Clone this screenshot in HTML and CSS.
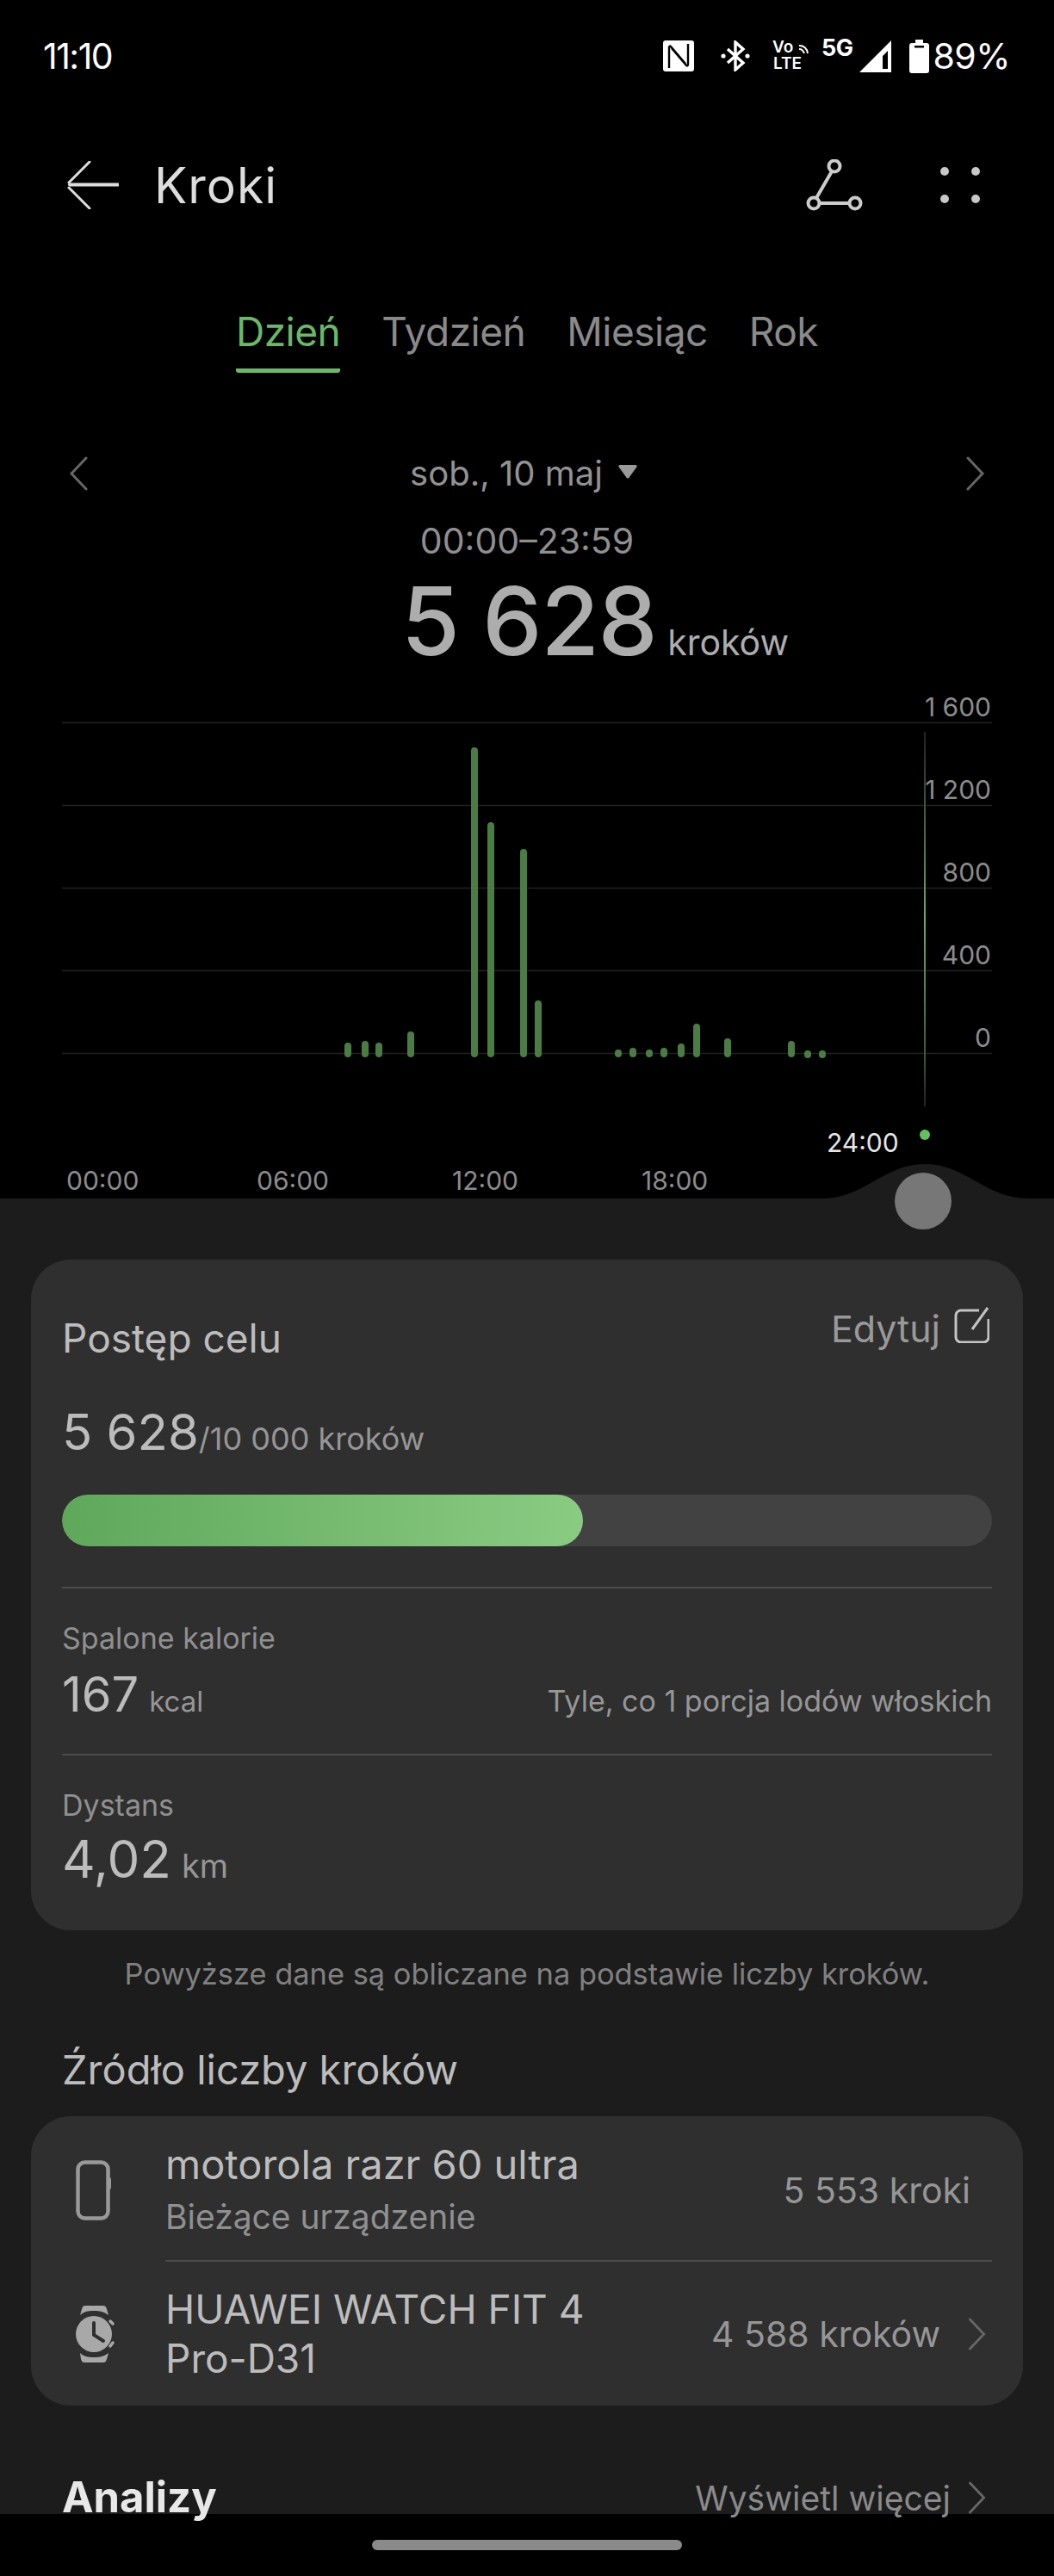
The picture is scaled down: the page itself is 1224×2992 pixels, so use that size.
FILE: index.html
```html
<!DOCTYPE html>
<html lang="pl">
<head>
<meta charset="utf-8">
<title>Kroki</title>
<link rel="stylesheet" href="styles.css">
</head>
<body>
<div class="phone">
  <header class="top">
    <div class="status">
      <span class="clock">11:10</span>
      <div class="status-icons">
        <svg class="i-nfc" viewBox="0 0 36 36"><rect width="36" height="36" rx="3" fill="#fff"/><path d="M7 32V8c0-1 1-2 2-1l17 20M29 4v24c0 1-1 2-2 1L10 9" fill="none" stroke="#000" stroke-width="2.4"/></svg>
        <svg class="i-bt" viewBox="0 0 34 36"><path d="M8 10l18 16-9 8V2l9 8-18 16" fill="none" stroke="#fff" stroke-width="3.4"/><circle cx="3" cy="18" r="2.600" fill="#fff"/><circle cx="31" cy="18" r="2.600" fill="#fff"/></svg>
        <div class="volte"><span class="vo">Vo</span><svg class="i-arc" viewBox="0 0 14 14"><path d="M1 4c5 0 9 3 10 9M1 8c3 0 5 2 6 5" fill="none" stroke="#fff" stroke-width="2"/></svg><span class="lte">LTE</span></div>
        <span class="fiveg">5G</span>
        <svg class="i-signal" viewBox="0 0 37 37"><path d="M37 0v37H0zM33 12L27 18v15h6z" fill="#fff" fill-rule="evenodd"/></svg>
        <svg class="i-batt" viewBox="0 0 23 39"><path d="M7 0h9v4h4a3 3 0 0 1 3 3v29a3 3 0 0 1-3 3H3a3 3 0 0 1-3-3V7a3 3 0 0 1 3-3h4z" fill="#fff"/><rect x="6" y="7" width="11" height="2.5" fill="#000"/></svg>
        <span class="pct">89%</span>
      </div>
    </div>
    <div class="titlebar">
      <svg class="i-back" viewBox="0 0 60 56"><path d="M3 27.500h56" stroke="#ddd" stroke-width="4" stroke-linecap="round"/><path d="M26 1L2 25M2 31l24 24" fill="none" stroke="#ddd" stroke-width="3" stroke-linecap="round"/></svg>
      <h1 class="title">Kroki</h1>
      <svg class="i-route" viewBox="0 0 66 60"><g fill="none" stroke="#ccc" stroke-width="4"><circle cx="33" cy="8" r="6.500"/><circle cx="9" cy="51" r="6.500"/><circle cx="57" cy="51" r="6.500"/><path d="M30 14L12 45M16 51h34"/></g></svg>
      <div class="i-dots"><i></i><i></i><i></i><i></i></div>
    </div>
    <nav class="tabs">
      <span class="tab on">Dzień</span><span class="tab">Tydzień</span><span class="tab">Miesiąc</span><span class="tab">Rok</span>
    </nav>
    <div class="daterow">
      <svg class="chev" viewBox="0 0 22 40"><path d="M20 2L3 20l17 18" fill="none" stroke="#666" stroke-width="3" stroke-linecap="round"/></svg>
      <div class="date"><span>sob., 10 maj</span><svg class="tri" viewBox="0 0 22 16"><path d="M2 0h18c2 0 2 2 1 3l-8 11c-1 2-3 2-4 0L1 3C0 2 0 0 2 0z" fill="#9a9a9a"/></svg></div>
      <svg class="chev" viewBox="0 0 22 40"><path d="M2 2l17 18L2 38" fill="none" stroke="#666" stroke-width="3" stroke-linecap="round"/></svg>
    </div>
    <div class="range">00:00–23:59</div>
    <div class="total"><span class="big">5 628</span><span class="unit">kroków</span></div>
    <svg class="chart" viewBox="0 800 1224 592">
      <defs><linearGradient id="cur" x1="0" y1="0" x2="0" y2="1"><stop offset="0" stop-color="#222"/><stop offset=".5" stop-color="#6aa865"/><stop offset=".85" stop-color="#3c5c3a"/><stop offset="1" stop-color="#222"/></linearGradient></defs>
      <g class="grid"><path d="M72 839.500h1080M72 935.500h1080M72 1031.500h1080M72 1127.500h1080M72 1223.500h1080"/></g>
      <g class="bars"><path d="M404 1224V1215M424 1224V1213M440 1224V1215M477 1224V1202M551 1224V872M570 1224V959M608 1224V990M625 1224V1166M718 1224V1223M735 1224V1221M754 1224V1223M771 1224V1221M791 1224V1216M809 1224V1193M845 1224V1210M919 1224V1213M938 1224V1225M955 1224V1225"/></g>
      <rect x="1073" y="850" width="2" height="435" fill="url(#cur)"/>
      <g class="ylab"><text x="1151" y="832">1 600</text><text x="1151" y="928">1 200</text><text x="1151" y="1024">800</text><text x="1151" y="1120">400</text><text x="1151" y="1216">0</text></g>
      <g class="xlab"><text x="77" y="1382">00:00</text><text x="298" y="1382">06:00</text><text x="525" y="1382">12:00</text><text x="745" y="1382">18:00</text></g>
      <text class="now" x="960" y="1338">24:00</text>
      <circle cx="1074" cy="1318" r="6" fill="#62c05f"/>
    </svg>
  </header>
  <main class="sheet">
    <svg class="notch" viewBox="0 0 240 42"><path d="M0 41c50 0 72-40 120-40s70 40 120 40v1H0z" fill="#1c1c1c"/></svg>
    <div class="knob"></div>
    <section class="card goal">
      <div class="goal-head"><h2 class="goal-title">Postęp celu</h2><div class="edit"><span>Edytuj</span><svg class="i-edit" viewBox="0 0 42 42"><path d="M30 4H9a6 6 0 0 0-6 6v25a6 6 0 0 0 6 6h26a6 6 0 0 0 6-6V14" fill="none" stroke="#c4c4c4" stroke-width="3"/><path d="M40 1L22 26" stroke="#c4c4c4" stroke-width="3"/></svg></div></div>
      <div class="goal-num"><span class="gn">5 628</span><span class="gd">/10 000 kroków</span></div>
      <div class="bar"><div class="fill" style="width:56%"></div></div>
      <div class="stat first">
        <div class="stat-label">Spalone kalorie</div>
        <div class="stat-row low"><div><span class="sv">167</span><span class="su">kcal</span></div><span class="note">Tyle, co 1 porcja lodów włoskich</span></div>
      </div>
      <div class="stat">
        <div class="stat-label">Dystans</div>
        <div class="stat-row"><div><span class="sv dist">4,02</span><span class="su dist">km</span></div></div>
      </div>
    </section>
    <p class="disc">Powyższe dane są obliczane na podstawie liczby kroków.</p>
    <h2 class="src-title">Źródło liczby kroków</h2>
    <section class="card src">
      <div class="device d1">
        <div class="dicon"><svg class="i-phone" viewBox="0 0 42 70"><rect x="2.500" y="2.500" width="35" height="65" rx="8" fill="none" stroke="#999" stroke-width="4.500"/><rect x="37" y="20" width="4" height="14" rx="2" fill="#999"/></svg></div>
        <div class="dbody">
          <div class="dname">motorola razr 60 ultra</div>
          <div class="dsub">Bieżące urządzenie</div>
        </div>
        <span class="dval">5 553 kroki</span>
      </div>
      <div class="device d2">
        <div class="dicon"><svg class="i-watch" viewBox="0 0 46 66"><path d="M10 0h22c2 0 3 1 4 4l2 7C33 7 28 6 21 6S9 7 5 11l2-7c1-3 2-4 3-4zM5 55c4 4 9 5 16 5s12-1 17-5l-2 7c-1 3-2 4-4 4H10c-2 0-3-1-4-4z" fill="#a8a8a8"/><circle cx="21" cy="33" r="21" fill="#a8a8a8"/><path d="M21 20v14l11 7" fill="none" stroke="#2f2f2f" stroke-width="4" stroke-linecap="round"/><path d="M40 18l3 3M40 47l3-4" stroke="#a8a8a8" stroke-width="3.500" stroke-linecap="round"/></svg></div>
        <div class="dbody wide"><div class="dname">HUAWEI WATCH FIT 4<br>Pro-D31</div></div>
        <span class="dval">4 588 kroków</span>
        <svg class="chev small" viewBox="0 0 22 40"><path d="M2 2l17 18L2 38" fill="none" stroke="#666" stroke-width="3" stroke-linecap="round"/></svg>
      </div>
    </section>
    <div class="analysis">
      <h2 class="an-title">Analizy</h2>
      <div class="an-more"><span>Wyświetl więcej</span><svg class="chev small" viewBox="0 0 22 40"><path d="M2 2l17 18L2 38" fill="none" stroke="#666" stroke-width="3" stroke-linecap="round"/></svg></div>
    </div>
  </main>
  <footer class="navbar"><div class="handle"></div></footer>
</div>
</body>
</html>
```

FILE: styles.css
```css
* { box-sizing: border-box; }
html, body { margin: 0; padding: 0; background: #000; }
body { font-family: Inter, "Noto Sans", "Liberation Sans", sans-serif; font-weight: 400; }
h1, h2, p { margin: 0; font-weight: 400; }
svg { display: block; flex: none; }

.phone { width: 1224px; height: 2992px; display: flex; flex-direction: column; overflow: hidden; background: #000; }
.top { flex: none; height: 1392px; display: flex; flex-direction: column; }

/* status bar */
.status { height: 130px; display: flex; justify-content: space-between; align-items: center; padding: 0 51px 0 50px; color: #fff; }
.clock { font-size: 41px; letter-spacing: -1.5px; }
.status-icons { display: flex; align-items: center; }
.i-nfc { width: 36px; height: 36px; }
.i-bt { width: 34px; height: 36px; margin-left: 31px; }
.volte { width: 44px; height: 38px; margin-left: 26px; position: relative; color: #fff; font-weight: 600; }
.vo { position: absolute; left: 0; top: -3px; font-size: 19px; }
.lte { position: absolute; left: 1px; top: 16px; font-size: 19px; }
.i-arc { position: absolute; right: 0; top: 3px; width: 14px; height: 14px; }
.fiveg { font-size: 27px; font-weight: 700; color: #fff; margin-left: 13px; margin-top: -18px; letter-spacing: -.5px; line-height: 22px; }
.i-signal { width: 37px; height: 37px; margin-left: 8px; }
.i-batt { width: 23px; height: 39px; margin-left: 21px; }
.pct { font-size: 41px; margin-left: 4px; letter-spacing: -.5px; }

/* title bar */
.titlebar { height: 170px; display: flex; align-items: center; padding: 0 86px 0 78px; }
.i-back { width: 60px; height: 56px; }
.title { font-size: 57px; color: #ddd; margin-left: 41px; flex: 1; letter-spacing: 1px; }
.i-route { width: 66px; height: 60px; margin-right: 90px; }
.i-dots { width: 46px; height: 42px; display: grid; grid-template-columns: 10px 10px; justify-content: space-between; align-content: space-between; }
.i-dots i { width: 10px; height: 10px; border-radius: 50%; background: #c8c8c8; }

/* tabs */
.tabs { height: 133px; padding-top: 60px; display: flex; justify-content: center; gap: 48px; }
.tab { height: 73px; font-size: 46px; line-height: 50px; letter-spacing: -.5px; color: #8a8a8a; }
.tab.on { color: #69b967; border-bottom: 5px solid #69b967; border-radius: 0 0 3px 3px; }

/* date */
.daterow { height: 50px; margin-top: 92px; padding: 0 80px; display: flex; justify-content: space-between; align-items: center; }
.chev { width: 22px; height: 40px; }
.date { display: flex; align-items: center; gap: 18px; color: #929292; font-size: 40px; line-height: 50px; padding-right: 8px; }
.tri { width: 22px; height: 16px; margin-top: -4px; }
.range { height: 50px; margin-top: 28px; text-align: center; color: #8f8f8f; font-size: 41px; line-height: 50px; }
.total { height: 100px; margin-top: 18px; padding-left: 158px; display: flex; justify-content: center; align-items: baseline; gap: 13px; color: #adadad; }
.big { font-size: 110px; line-height: 100px; letter-spacing: -1.5px; font-weight: 500; }
.unit { font-size: 41px; }

/* chart */
.chart { width: 1224px; height: 592px; margin-top: auto; }
.grid path { stroke: #222; stroke-width: 1.5; fill: none; }
.bars path { stroke: #4a7c43; stroke-width: 8; stroke-linecap: round; fill: none; }
.ylab text { font-size: 30px; fill: #8c8c8c; text-anchor: end; }
.xlab text { font-size: 30px; fill: #8c8c8c; }
.now { font-size: 30px; fill: #e6e6e6; }

/* sheet */
.sheet { flex: 1; min-height: 0; position: relative; background: #1c1c1c; padding: 71px 36px 0; }
.notch { position: absolute; left: 954px; top: -41px; width: 240px; height: 42px; }
.knob { position: absolute; left: 1039px; top: -30px; width: 66px; height: 66px; border-radius: 50%; background: #777; }
.card { background: #2f2f2f; border-radius: 46px; }

.goal { height: 779px; padding: 0 36px; }
.goal-head { height: 146px; display: flex; justify-content: space-between; }
.goal-title { font-size: 46px; line-height: 50px; color: #bcbcbc; margin-top: 66px; }
.edit { display: flex; gap: 15px; color: #999; font-size: 43px; line-height: 50px; margin-top: 55px; margin-right: 3px; align-items: flex-start; }
.i-edit { width: 42px; height: 42px; }
.goal-num { height: 60px; display: flex; align-items: baseline; margin-top: 24px; }
.gn { font-size: 58px; line-height: 60px; color: #bcbcbc; }
.gd { font-size: 36px; color: #969696; }
.bar { height: 60px; border-radius: 30px; background: #424242; margin-top: 43px; overflow: hidden; }
.fill { height: 100%; border-radius: 30px; background: linear-gradient(90deg, #5fa85b, #8acb82); }
.stat { height: 194px; border-top: 2px solid #4a4a4a; padding-top: 36px; }
.stat.first { margin-top: 47px; }
.stat-label { font-size: 34px; line-height: 44px; color: #909090; }
.stat-row { display: flex; justify-content: space-between; align-items: baseline; margin-top: 8px; }
.stat-row.low { margin-top: 11px; }
.sv { font-size: 56px; line-height: 64px; color: #bcbcbc; }
.sv.dist { font-size: 60px; }
.su { font-size: 33px; color: #969696; margin-left: 12px; }
.su.dist { font-size: 38px; }
.note { font-size: 34px; color: #969696; }

.disc { text-align: center; color: #808080; font-size: 34.400px; line-height: 50px; margin-top: 26px; }
.src-title { font-size: 47px; line-height: 56px; color: #bcbcbc; margin: 58px 0 0 36px; }

.src { height: 336px; margin-top: 26px; padding: 0 36px; }
.device { display: flex; align-items: center; }
.d1 { height: 169px; padding-top: 3px; position: relative; }
.d1::after { content: ""; position: absolute; left: 120px; right: 0; bottom: 0; height: 2px; background: #4a4a4a; }
.d2 { height: 167px; }
.dicon { width: 120px; padding-left: 16px; }
.i-phone { width: 42px; height: 70px; }
.i-watch { width: 46px; height: 66px; }
.dbody { flex: 1; }
.dname { font-size: 47px; line-height: 57px; color: #bcbcbc; }
.d2 .dname { font-size: 46px; }
.dsub { font-size: 39px; line-height: 56px; color: #909090; margin-top: 5px; }
.dval { font-size: 41px; color: #969696; padding-right: 25px; }
.d2 .dval { padding-right: 32px; }
.chev.small { width: 22px; height: 38px; margin-right: 6px; }

.analysis { display: flex; justify-content: space-between; align-items: center; margin: 77px 0 0 36px; padding-right: 36px; }
.an-title { font-size: 49px; line-height: 60px; font-weight: 700; color: #e8e8e8; }
.an-more { display: flex; align-items: center; gap: 20px; color: #8a8a8a; font-size: 39px; }

.navbar { flex: none; height: 72px; background: #000; display: flex; justify-content: center; padding-top: 30px; }
.handle { width: 360px; height: 12px; border-radius: 6px; background: #8a8a8a; }
```
